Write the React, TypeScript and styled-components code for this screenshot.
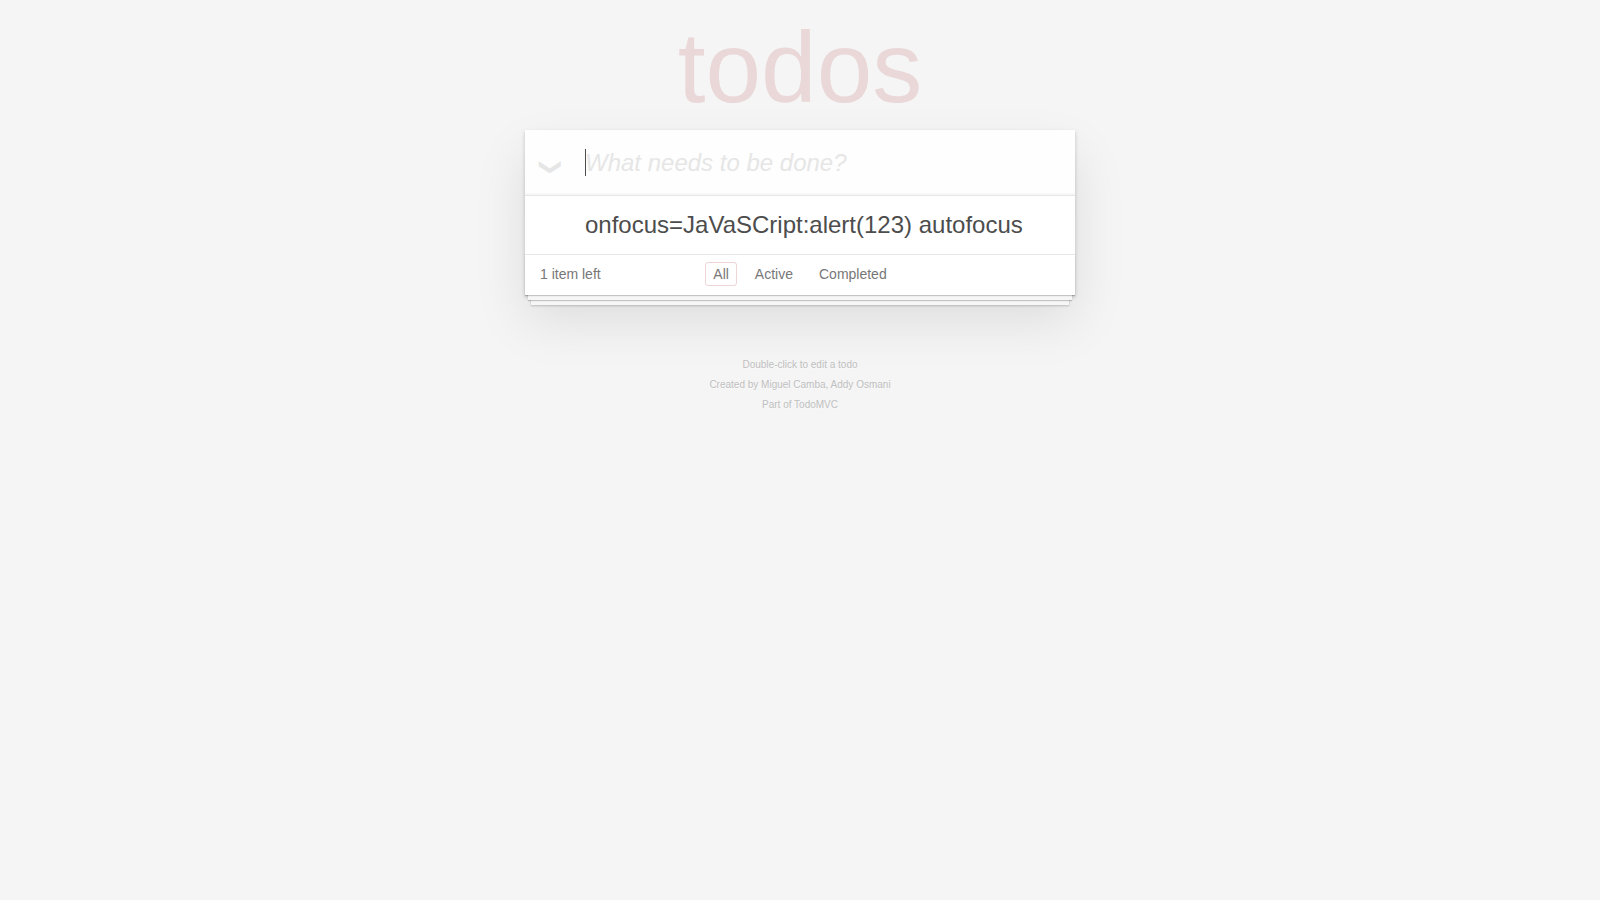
import React, { useState } from 'react';
import styled, { createGlobalStyle } from 'styled-components';

const GlobalStyle = createGlobalStyle`
  body {
    margin: 0;
    background: #f5f5f5;
    font: 14px/20px 'Liberation Sans', Arial, sans-serif;
    color: #4d4d4d;
    -webkit-font-smoothing: antialiased;
  }
`;

const Page = styled.div`
  min-width: 230px;
  max-width: 550px;
  margin: 0 auto;
`;

const Title = styled.h1`
  margin: 0;
  padding: 12px 0 8px;
  font-size: 100px;
  line-height: 110px;
  font-weight: 400;
  text-align: center;
  color: rgba(175, 47, 47, 0.15);
`;

const Card = styled.section`
  background: #fff;
  box-shadow: 0 2px 4px 0 rgba(0, 0, 0, 0.2), 0 25px 50px 0 rgba(0, 0, 0, 0.1);
`;

const EntryRow = styled.div`
  display: flex;
  height: 65px;
  background: rgba(0, 0, 0, 0.003);
  box-shadow: inset 0 -2px 1px rgba(0, 0, 0, 0.03);
`;

const ToggleAll = styled.label`
  display: flex;
  flex: none;
  align-items: center;
  justify-content: center;
  box-sizing: border-box;
  width: 60px;
  padding: 8px 8px 0 0;
  font-size: 22px;
  color: #e6e6e6;
  cursor: pointer;

  span { transform: rotate(90deg); }
`;

const HiddenCheckbox = styled.input`
  appearance: none;
  width: 0;
  height: 0;
  margin: 0;
`;

const EntryField = styled.div<{ $empty: boolean }>`
  display: flex;
  flex: 1;
  min-width: 0;
  position: relative;

  &::before {
    content: '';
    display: ${p => (p.$empty ? 'block' : 'none')};
    position: absolute;
    top: 19px;
    left: 0;
    width: 1px;
    height: 27px;
    background: #4d4d4d;
    pointer-events: none;
  }
`;

const NewTodo = styled.input`
  flex: 1;
  min-width: 0;
  box-sizing: border-box;
  padding: 16px 16px 16px 0;
  border: 0;
  outline: 0;
  background: transparent;
  font: 24px/34px 'Liberation Sans', Arial, sans-serif;
  color: #4d4d4d;

  &::placeholder {
    font-style: italic;
    color: #e6e6e6;
    opacity: 1;
  }

  &:placeholder-shown { caret-color: transparent; }
`;

const TodoList = styled.ul`
  margin: 0;
  padding: 0;
  border-top: 1px solid #e6e6e6;
  list-style: none;
`;

const TodoItem = styled.li`
  padding: 15px 15px 15px 60px;
  font-size: 24px;
  line-height: 28px;
  overflow-wrap: anywhere;
`;

const Footer = styled.footer`
  display: grid;
  grid-template-columns: 1fr auto 1fr;
  position: relative;
  padding: 7px 15px 9px;
  border-top: 1px solid #e6e6e6;
  line-height: 24px;
  color: #777;

  &::before {
    content: '';
    position: absolute;
    inset: auto 0 0;
    height: 40px;
    pointer-events: none;
    box-shadow: 0 1px 1px rgba(0, 0, 0, 0.2), 0 8px 0 -3px #f6f6f6,
      0 9px 1px -3px rgba(0, 0, 0, 0.2), 0 16px 0 -6px #f6f6f6,
      0 17px 2px -6px rgba(0, 0, 0, 0.2);
  }
`;

const Filters = styled.nav`
  display: flex;
  gap: 10px;
`;

const Filter = styled.a<{ $active?: boolean }>`
  position: relative;
  padding: 1px 7px;
  border: 1px solid ${p => (p.$active ? 'rgba(175, 47, 47, 0.2)' : 'transparent')};
  border-radius: 3px;
  line-height: 20px;
  color: inherit;
  text-decoration: none;
`;

const Info = styled.footer`
  padding-top: 65px;
  font-size: 10px;
  text-align: center;
  color: #bfbfbf;
  text-shadow: 0 1px 0 rgba(255, 255, 255, 0.5);
`;

const InfoLine = styled.p`
  margin: 0 0 10px;
  line-height: 10px;
`;

const InfoLink = styled.a`
  color: inherit;
  text-decoration: none;
`;

export default function App() {
  const [text, setText] = useState('');
  return (
    <Page>
      <GlobalStyle />
      <header>
        <Title>todos</Title>
      </header>
      <Card>
        <EntryRow>
          <ToggleAll>
            <HiddenCheckbox type="checkbox" aria-label="Mark all as complete" />
            <span>❯</span>
          </ToggleAll>
          <EntryField $empty={text === ''}>
            <NewTodo
              autoFocus
              aria-label="New todo"
              placeholder="What needs to be done?"
              value={text}
              onChange={e => setText(e.target.value)}
            />
          </EntryField>
        </EntryRow>
        <TodoList>
          <TodoItem>onfocus=JaVaSCript:alert(123) autofocus</TodoItem>
        </TodoList>
        <Footer>
          <span>1 item left</span>
          <Filters>
            <Filter href="#/" $active>All</Filter>
            <Filter href="#/active">Active</Filter>
            <Filter href="#/completed">Completed</Filter>
          </Filters>
        </Footer>
      </Card>
      <Info>
        <InfoLine>Double-click to edit a todo</InfoLine>
        <InfoLine>
          Created by <InfoLink href="#miguel">Miguel Camba</InfoLink>, <InfoLink href="#addy">Addy Osmani</InfoLink>
        </InfoLine>
        <InfoLine>Part of <InfoLink href="#todomvc">TodoMVC</InfoLink></InfoLine>
      </Info>
    </Page>
  );
}
